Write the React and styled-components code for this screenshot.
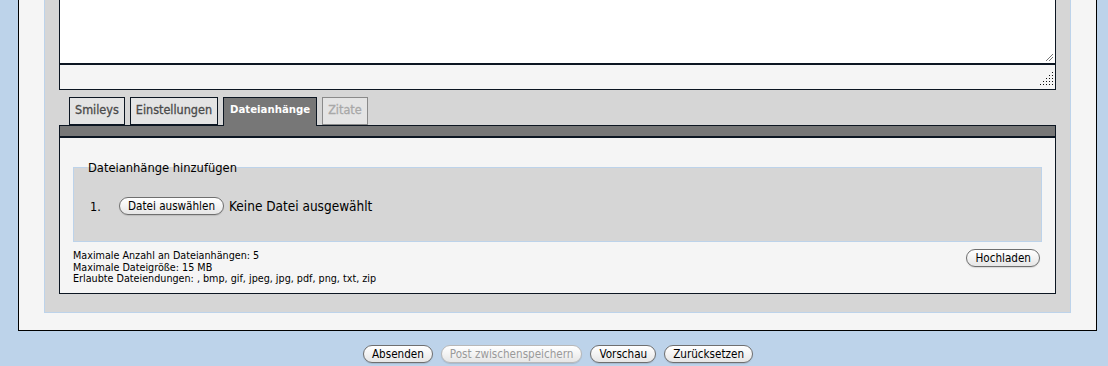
import React from 'react';
import styled, { createGlobalStyle } from 'styled-components';

const Global = createGlobalStyle`
  html, body {
    margin: 0;
    padding: 0;
    background: #bdd3ea;
    overflow: hidden;
  }
  body {
    font-family: "DejaVu Sans Condensed", "DejaVu Sans", sans-serif;
    color: #000;
  }
`;

const Page = styled.div`
  width: 1108px;
  height: 366px;
  overflow: hidden;
`;

const Outer = styled.div`
  margin: -30px 11px 0 18px;
  border: 1px solid #000;
  background: #f5f5f5;
  padding: 0 25px 17px 25px;
`;

const Inner = styled.div`
  border: 1px solid #bdd3ea;
  border-top: none;
  background: #d6d6d6;
  padding: 0 14px 18px 14px;
`;

const TextArea = styled.div`
  position: relative;
  height: 92px;
  background: #fff;
  border: 1px solid #0c1622;
  border-top: none;
`;

const Grip = styled.svg`
  position: absolute;
  right: 1px;
  bottom: 1px;
`;

const GripStrip = styled.div`
  position: relative;
  height: 24px;
  background: #f5f5f5;
  border: 1px solid #0c1622;
`;

const Tabs = styled.div`
  display: flex;
  gap: 5px;
  margin-top: 7px;
  padding-left: 10px;
  height: 29px;
  align-items: flex-start;
`;

const Tab = styled.div`
  box-sizing: border-box;
  height: ${({ active }) => (active ? '29px' : '28px')};
  padding: ${({ active }) => (active ? '3px 6px 0' : '3px 5px 0')};
  border: 1px solid ${({ disabled }) => (disabled ? '#8a8a8a' : '#0c1622')};
  border-bottom: ${({ active }) => (active ? 'none' : undefined)};
  background: ${({ active }) => (active ? '#777' : '#e4e4e4')};
  color: ${({ active, disabled }) => (active ? '#fff' : disabled ? '#a8a8a8' : '#4a4a4a')};
  font-weight: ${({ active }) => (active ? 'bold' : 'normal')};
  font-size: ${({ active }) => (active ? '11.3px' : '12.5px')};
  line-height: 18px;
  -webkit-text-stroke: ${({ active }) => (active ? '0' : '0.3px')};
  position: relative;
  z-index: 1;
`;

const Bar = styled.div`
  height: 10px;
  background: #777;
  border: 1px solid #0c1622;
  margin-top: -1px;
`;

const Content = styled.div`
  background: #f5f5f5;
  border: 1px solid #0c1622;
  padding: 22px 13px 0 13px;
  height: 133px;
  box-sizing: content-box;
`;

const Fieldset = styled.fieldset`
  margin: 0;
  border: 1px solid #bdd3ea;
  background: #d6d6d6;
  padding: 22px 16px 26px 16px;
  legend {
    font-size: 12.8px;
    padding: 0 1px;
    margin-left: -3px;
  }
`;

const FileRow = styled.div`
  display: flex;
  align-items: center;
  font-size: 13.5px;
`;

const Num = styled.span`
  width: 29px;
  font-size: 12.5px;
`;

const Pill = styled.button`
  font-family: "DejaVu Sans Condensed", "DejaVu Sans", sans-serif;
  font-size: 11.6px;
  height: 18px;
  line-height: 14px;
  padding: 0 8px;
  border-radius: 9px;
  border: 1px solid ${({ disabled }) => (disabled ? '#b8b8b8' : '#6f6f6f')};
  background: linear-gradient(#ffffff, #f3f3f3 50%, #e6e6e6);
  color: ${({ disabled }) => (disabled ? '#9a9a9a' : '#000')};
  box-shadow: 0 1px 1px rgba(0,0,0,0.12);
  cursor: default;
  margin: 0 ${({ gapRight }) => gapRight || 0}px 0 0;
`;

const Footer = styled.div`
  display: flex;
  justify-content: space-between;
  align-items: flex-start;
  padding: 7px 2px 0 0;
`;

const Info = styled.div`
  font-size: 10.7px;
  line-height: 11.5px;
  padding-top: 1px;
`;

const Actions = styled.div`
  display: flex;
  justify-content: center;
  gap: 8px;
  margin-top: 14px;
  padding-left: 8px;
`;

function DotGrip() {
  const dots = [];
  for (let r = 0; r < 5; r++) {
    for (let c = 0; c <= r; c++) {
      dots.push(<rect key={r + '-' + c} x={18 - c * 3} y={2 + r * 3} width="1" height="1" fill="#111" />);
    }
  }
  return (
    <Grip width="20" height="18" viewBox="0 0 20 18">
      {dots}
    </Grip>
  );
}

export default function App() {
  return (
    <Page>
      <Global />
      <Outer>
        <Inner>
          <TextArea>
            <Grip width="10" height="10" viewBox="0 0 10 10">
              <line x1="2" y1="9" x2="9" y2="2" stroke="#777" strokeWidth="1" />
              <line x1="5" y1="9" x2="9" y2="5" stroke="#777" strokeWidth="1" />
            </Grip>
          </TextArea>
          <GripStrip>
            <DotGrip />
          </GripStrip>
          <Tabs>
            <Tab>Smileys</Tab>
            <Tab>Einstellungen</Tab>
            <Tab active>Dateianhänge</Tab>
            <Tab disabled>Zitate</Tab>
          </Tabs>
          <Bar />
          <Content>
            <Fieldset>
              <legend>Dateianhänge hinzufügen</legend>
              <FileRow>
                <Num>1.</Num>
                <Pill gapRight={5}>Datei auswählen</Pill>
                <span>Keine Datei ausgewählt</span>
              </FileRow>
            </Fieldset>
            <Footer>
              <Info>
                Maximale Anzahl an Dateianhängen: 5<br />
                Maximale Dateigröße: 15 MB<br />
                Erlaubte Dateiendungen: , bmp, gif, jpeg, jpg, pdf, png, txt, zip
              </Info>
              <Pill>Hochladen</Pill>
            </Footer>
          </Content>
        </Inner>
      </Outer>
      <Actions>
        <Pill>Absenden</Pill>
        <Pill disabled>Post zwischenspeichern</Pill>
        <Pill>Vorschau</Pill>
        <Pill>Zurücksetzen</Pill>
      </Actions>
    </Page>
  );
}
